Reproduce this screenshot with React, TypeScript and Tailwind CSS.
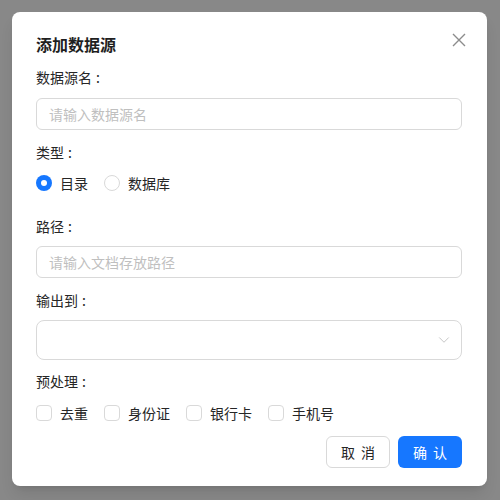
import { ChevronDown } from "lucide-react";

const font = { fontFamily: '"Noto Sans CJK SC", "Noto Sans", sans-serif' };

function Label({ text, className }: { text: string; className?: string }) {
  return (
    <div className={`h-[22px] text-sm leading-[22px] text-[#262626] ${className ?? ""}`}>
      {text}
      <span className="ml-[4px]">:</span>
    </div>
  );
}

function Radio({ label, checked }: { label: string; checked?: boolean }) {
  return (
    <div className="flex items-center gap-2">
      {checked ? (
        <span className="flex h-4 w-4 items-center justify-center rounded-full bg-[#1677ff]">
          <span className="h-[6px] w-[6px] rounded-full bg-white" />
        </span>
      ) : (
        <span className="h-4 w-4 rounded-full border border-[#d9d9d9] bg-white" />
      )}
      <span className="text-sm leading-[22px] text-[#262626]">{label}</span>
    </div>
  );
}

function Checkbox({ label }: { label: string }) {
  return (
    <div className="flex items-center gap-2">
      <span className="h-4 w-4 rounded-[4px] border border-[#d9d9d9] bg-white" />
      <span className="text-sm leading-[22px] text-[#262626]">{label}</span>
    </div>
  );
}

export default function App() {
  return (
    <div className="h-[500px] w-[500px] bg-[#888888] pl-3 pt-3" style={font}>
      <div className="relative h-[474px] w-[475px] rounded-lg bg-white pl-6 pr-[25px] pt-5 shadow-lg">
        {/* Header */}
        <div className="h-6 text-base font-bold leading-6 text-[#1f1f1f]">添加数据源</div>
        <button className="absolute right-[21px] top-[21px] flex h-[14px] w-[14px] items-center justify-center text-[#8c8c8c]">
          <svg width="14" height="14" viewBox="0 0 14 14" fill="none" stroke="currentColor" strokeWidth="1.4">
            <path d="M1 1L13 13M13 1L1 13" />
          </svg>
        </button>

        <Label text="数据源名" className="mt-[10px]" />
        <div className="mt-[10px] flex h-8 items-center rounded-md border border-[#d9d9d9] px-3 text-sm text-[#bfbfbf]">
          请输入数据源名
        </div>

        <Label text="类型" className="mt-[11px]" />
        <div className="mt-[9px] flex h-[22px] items-center gap-4">
          <Radio label="目录" checked />
          <Radio label="数据库" />
        </div>

        <Label text="路径" className="mt-[21px]" />
        <div className="mt-[9px] flex h-8 items-center rounded-md border border-[#d9d9d9] px-3 text-sm text-[#bfbfbf]">
          请输入文档存放路径
        </div>

        <Label text="输出到" className="mt-[11px]" />
        <div className="mt-[9px] flex h-10 items-center justify-end rounded-lg border border-[#d9d9d9] pr-[8px]">
          <ChevronDown className="h-[18px] w-[18px] text-[#bfbfbf]" strokeWidth={1.2} />
        </div>

        <Label text="预处理" className="mt-[10px]" />
        <div className="mt-[10px] flex h-[22px] items-center gap-4">
          <Checkbox label="去重" />
          <Checkbox label="身份证" />
          <Checkbox label="银行卡" />
          <Checkbox label="手机号" />
        </div>

        {/* Footer */}
        <div className="mt-[12px] flex justify-end gap-2">
          <button className="flex h-8 w-16 items-center justify-center gap-[6px] rounded-md border border-[#d9d9d9] bg-white text-sm text-[#262626]">
            <span>取</span>
            <span>消</span>
          </button>
          <button className="flex h-8 w-16 items-center justify-center gap-[6px] rounded-md bg-[#1677ff] text-sm text-white">
            <span>确</span>
            <span>认</span>
          </button>
        </div>
      </div>
    </div>
  );
}
